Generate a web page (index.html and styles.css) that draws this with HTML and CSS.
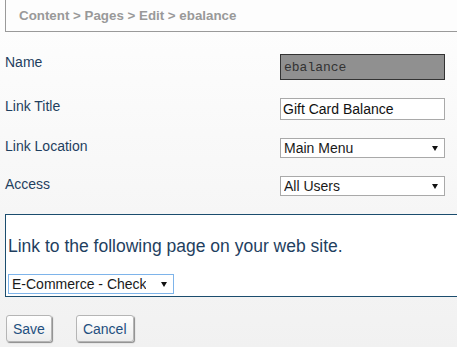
FILE: index.html
```html
<!DOCTYPE html>
<html lang="en">
<head>
  <meta charset="UTF-8" />
  <title>Edit Page</title>
  <link rel="stylesheet" href="styles.css">
</head>
<body>
  <div class="crumbs">Content &gt; Pages &gt; Edit &gt; ebalance</div>

  <form class="page-form">
    <div class="fields">
      <label class="field-label">Name</label>
      <input class="name-input" type="text" value="ebalance" readonly>

      <label class="field-label">Link Title</label>
      <input class="text-input" type="text" value="Gift Card Balance">

      <label class="field-label">Link Location</label>
      <span class="select-wrap">
        <select class="select-input">
          <option>Main Menu</option>
        </select>
      </span>

      <label class="field-label">Access</label>
      <span class="select-wrap">
        <select class="select-input">
          <option>All Users</option>
        </select>
      </span>
    </div>

    <div class="link-box">
      <p class="link-text">Link to the following page on your web site.</p>
      <span class="select-wrap page-select">
        <select class="select-input">
          <option>E-Commerce - Checkout Balance</option>
        </select>
      </span>
    </div>

    <div class="actions">
      <button type="button" class="form-button">Save</button>
      <button type="button" class="form-button">Cancel</button>
    </div>
  </form>
</body>
</html>
```

FILE: styles.css
```css
html {
  overflow: hidden;
}

body {
  margin: 0;
  height: 347px;
  background: linear-gradient(#fefefe, #f1f1f1);
  font-family: "Liberation Sans", Arial, sans-serif;
  font-size: 14px;
  color: #1f3f5f;
}

.crumbs {
  margin: 0 -20px 0 5px;
  height: 32px;
  padding-left: 13px;
  box-sizing: border-box;
  border-left: 1px solid #9a9a9a;
  border-bottom: 1px solid #9a9a9a;
  background-color: #fdfdfd;
  color: #999;
  font-size: 13.33px;
  font-weight: bold;
  line-height: 31px;
}

.fields {
  display: grid;
  grid-template-columns: 275px 165px;
  row-gap: 18px;
  align-items: start;
  margin: 22px 0 0 5px;
}

.field-label {
  line-height: 16px;
}

.name-input,
.text-input,
.select-input {
  margin: 0;
  box-sizing: border-box;
  width: 165px;
  font-family: "Liberation Sans", Arial, sans-serif;
  font-size: 14px;
  outline: none;
}

.name-input {
  height: 26px;
  padding: 0 3px;
  border: 1px solid #333;
  background-color: #909090;
  color: #333;
  font-family: "Liberation Mono", monospace;
  font-size: 13px;
}

.text-input {
  height: 22px;
  padding: 0 2px;
  border: 1px solid #a9a9a9;
  background-color: #fff;
  color: #111;
}

.select-wrap {
  position: relative;
  display: block;
  width: 165px;
}

.select-wrap::after {
  content: "";
  position: absolute;
  right: 7px;
  top: 8px;
  border-left: 3px solid transparent;
  border-right: 3px solid transparent;
  border-top: 5px solid #111;
  pointer-events: none;
}

.select-input {
  display: block;
  height: 20px;
  padding: 0 24px 0 3px;
  border: 1px solid #a9a9a9;
  border-radius: 0;
  background-color: #fff;
  color: #1a1a1a;
  line-height: 18px;
  appearance: none;
  -webkit-appearance: none;
}

.link-box {
  margin: 18px -20px 0 5px;
  padding: 21px 0 2px 2px;
  border: 1px solid #1b4d6e;
  background-color: #fff;
}

.link-text {
  margin: 0 0 18px 0;
  font-size: 17.5px;
  line-height: 20px;
  color: #1f3f5f;
}

.page-select {
  width: 166px;
}

.page-select .select-input {
  width: 166px;
  padding-right: 27px;
  border-color: #7eb4ea;
}

.actions {
  display: flex;
  gap: 24px;
  margin: 18px 0 0 6px;
}

.form-button {
  height: 27px;
  padding: 0 6px;
  border: 1px solid #b5b5b5;
  border-radius: 3px;
  background: linear-gradient(#fff, #ececec);
  box-shadow: 1px 1px 1px #8a8a8a;
  color: #1f4f7f;
  font-family: "Liberation Sans", Arial, sans-serif;
  font-size: 14px;
  cursor: pointer;
}
```
